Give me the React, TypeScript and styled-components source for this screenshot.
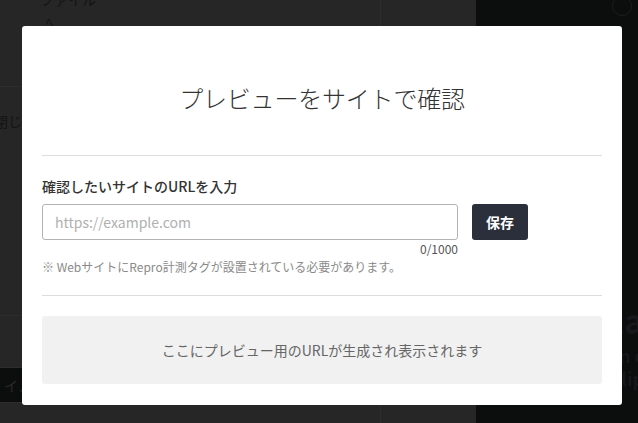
import React from "react";
import styled, { createGlobalStyle } from "styled-components";

const Global = createGlobalStyle`
  html, body { margin: 0; padding: 0; }
  body {
    width: 638px;
    height: 423px;
    overflow: hidden;
    background: #262626;
    font-family: "Noto Sans CJK JP", "Noto Sans", sans-serif;
  }
  * { box-sizing: border-box; }
`;

const Page = styled.div`
  position: relative;
  width: 638px;
  height: 423px;
  display: grid;
  grid-template-columns: 380px 96px 1fr;
  overflow: hidden;
`;

const MainCol = styled.div`
  display: flex;
  flex-direction: column;
  background: #262626;
`;

const Section = styled.div<{ $h: number; $dark?: boolean }>`
  height: ${(p) => p.$h}px;
  flex: none;
  border-bottom: 1px solid #2d2d2d;
  background: ${(p) => (p.$dark ? "#0c0d0d" : "#262626")};
  color: #151515;
  font-size: 14px;
  padding: ${(p) => (p.$dark ? "8px 0 0 2px" : "0")};
  display: flex;
  flex-direction: column;
`;

const FaintText = styled.div<{ $pad: string }>`
  padding: ${(p) => p.$pad};
  font-size: 14px;
  line-height: 18px;
  color: #141414;
  white-space: nowrap;
`;

const MidCol = styled.div`
  background: #262626;
  border-left: 1px solid #2c2c2c;
`;

const SideCol = styled.div`
  background: #0c0d0d;
  display: flex;
  flex-direction: column;
  align-items: flex-end;
  padding: 0 6px 0 0;
`;

const SideCircle = styled.div`
  width: 20px;
  height: 20px;
  margin-top: -4px;
  border-radius: 50%;
  border: 1px solid #1c1d1f;
`;

const SideText = styled.div<{ $size: number; $top: number }>`
  align-self: flex-end;
  margin-top: ${(p) => p.$top}px;
  margin-right: -12px;
  font-size: ${(p) => p.$size}px;
  line-height: 1.2;
  color: #17181a;
  font-weight: 700;
`;

const Modal = styled.div`
  position: absolute;
  top: 26px;
  left: 22px;
  width: 600px;
  background: #ffffff;
  border-radius: 3px;
  padding: 0 20px 21px;
  display: flex;
  flex-direction: column;
`;

const Header = styled.div`
  padding: 56px 0 41px;
  border-bottom: 1px solid #dddddd;
  text-align: center;
`;

const Title = styled.h2`
  margin: 0;
  font-size: 24px;
  line-height: 32px;
  font-weight: 300;
  color: #333333;
  letter-spacing: -0.2px;
`;

const Body = styled.div`
  padding: 20px 0 19px;
  border-bottom: 1px solid #dddddd;
  display: flex;
  flex-direction: column;
`;

const Label = styled.label`
  font-size: 14px;
  line-height: 20px;
  font-weight: 500;
  color: #333333;
  margin-bottom: 8px;
`;

const Row = styled.div`
  display: flex;
  align-items: flex-start;
  gap: 14px;
`;

const FieldCol = styled.div`
  width: 416px;
  display: flex;
  flex-direction: column;
`;

const Input = styled.input`
  width: 100%;
  height: 36px;
  border: 1px solid #b3b3b3;
  border-radius: 3px;
  padding: 0 12px;
  font-family: inherit;
  font-size: 14px;
  color: #333;
  outline: none;
  &::placeholder { color: #b0b0b0; }
`;

const Counter = styled.div`
  text-align: right;
  font-size: 12px;
  line-height: 18px;
  color: #555555;
`;

const SaveButton = styled.button`
  width: 56px;
  height: 36px;
  border: none;
  border-radius: 3px;
  background: #2b2f3b;
  color: #ffffff;
  font-family: inherit;
  font-size: 14px;
  font-weight: 700;
  cursor: pointer;
`;

const Note = styled.p`
  margin: 0;
  font-size: 12px;
  line-height: 18px;
  color: #8a8a8a;
`;

const PreviewBox = styled.div`
  margin-top: 20px;
  height: 68px;
  border-radius: 3px;
  background: #f1f1f1;
  display: flex;
  align-items: center;
  justify-content: center;
  font-size: 14px;
  color: #666666;
`;

export default function App() {
  return (
    <>
      <Global />
      <Page>
        <MainCol>
          <Section $h={87}>
            <FaintText $pad="0 0 0 40px" style={{ marginTop: -10 }}>ファイル</FaintText>
            <FaintText $pad="4px 0 0 46px">ﾍ</FaintText>
          </Section>
          <Section $h={229}>
            <FaintText $pad="25px 0 0 0" style={{ marginLeft: -6 }}>閉じる</FaintText>
          </Section>
          <Section $h={52} />
          <Section $h={35} $dark>
            <FaintText $pad="0 0 0 2px" style={{ color: "#2a2a2a" }}>イノ</FaintText>
          </Section>
        </MainCol>
        <MidCol />
        <SideCol>
          <SideCircle />
          <SideText $size={34} $top={284}>La</SideText>
          <SideText $size={18} $top={4}>n c</SideText>
          <SideText $size={18} $top={2}>lip</SideText>
        </SideCol>
        <Modal>
          <Header>
            <Title>プレビューをサイトで確認</Title>
          </Header>
          <Body>
            <Label htmlFor="url">確認したいサイトのURLを入力</Label>
            <Row>
              <FieldCol>
                <Input id="url" placeholder="https://example.com" />
                <Counter>0/1000</Counter>
              </FieldCol>
              <SaveButton>保存</SaveButton>
            </Row>
            <Note>※ WebサイトにRepro計測タグが設置されている必要があります。</Note>
          </Body>
          <PreviewBox>ここにプレビュー用のURLが生成され表示されます</PreviewBox>
        </Modal>
      </Page>
    </>
  );
}
